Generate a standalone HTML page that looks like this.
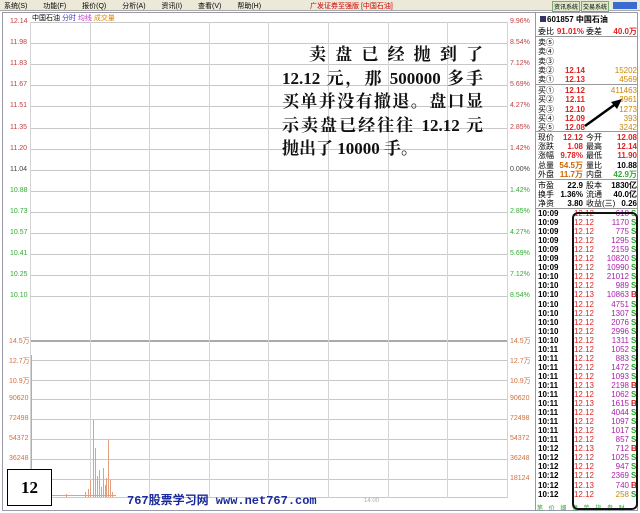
<!DOCTYPE html><html><head><meta charset="utf-8"><style>
*{margin:0;padding:0;box-sizing:border-box}
body{width:640px;height:513px;overflow:hidden;background:#fff;font-family:"Liberation Sans","Noto Sans CJK SC",sans-serif;font-size:8px;position:relative}
.a{position:absolute;white-space:nowrap}
.hl{position:absolute;height:1px;background:#c8c8c8}
.vl{position:absolute;width:1px;background:#d4d4d4}
.lab{position:absolute;font-size:7px;color:#c04040}
.rt{position:absolute;font-size:8px;left:536px;width:100px;height:9px;line-height:9px}
.big{position:absolute;left:282px;width:201px;font-family:"Liberation Serif","Noto Serif CJK SC",serif;font-weight:bold;font-size:17px;line-height:23.5px;color:#111;text-align:justify;text-align-last:justify}
</style></head><body>
<div class="a" style="left:0;top:0;width:640px;height:11px;background:#ece9d8;border-bottom:1px solid #aaa"></div>
<div class="a" style="left:4px;top:1px;font-size:7px;color:#000;word-spacing:14px">系统(S) 功能(F) 报价(Q) 分析(A) 资讯(I) 查看(V) 帮助(H)</div>
<div class="a" style="left:310px;top:1px;font-size:7px;color:#c00">广发证券至强版 [中国石油]</div>
<div class="a" style="left:552px;top:1px;font-size:6px;background:#dde8c8;border:1px solid #7a7;padding:0 1px">资讯系统</div>
<div class="a" style="left:581px;top:1px;font-size:6px;background:#dde8c8;border:1px solid #7a7;padding:0 1px">交易系统</div>
<div class="a" style="left:613px;top:2px;width:24px;height:7px;background:#3a6bd0"></div>
<div class="a" style="left:2px;top:12px;width:636px;height:499px;border:1px solid #99a"></div>
<div class="a" style="left:32px;top:13px;font-size:7px"><span>中国石油</span> <span style="color:#33c">分时</span> <span style="color:#c3c">均线</span> <span style="color:#d80">成交量</span></div>
<div class="a" style="left:31px;top:22px;width:85px;height:1px;background:#a3f"></div>
<div id="g"></div>
<div class="big" style="top:43px;padding-left:27px">卖盘已经抛到了</div>
<div class="big" style="top:67px">12.12 元，那 500000 多手</div>
<div class="big" style="top:90px">买单并没有撤退。盘口显</div>
<div class="big" style="top:114px">示卖盘已经往往 12.12 元</div>
<div class="big" style="top:137px;text-align-last:left">抛出了 10000 手。</div>
<div class="a" style="left:7px;top:469px;width:45px;height:37px;border:1px solid #000;background:#fff;font:bold 17px 'Liberation Serif',serif;text-align:center;line-height:36px">12</div>
<div class="a" style="left:127px;top:491px;font:bold 12px 'Liberation Mono','Noto Sans CJK SC',monospace;color:#1a2a9a">767股票学习网 www.net767.com</div>
<div class="a" style="left:364px;top:498px;font-size:6px;color:#aaa">14:00</div>
<div class="vl" style="left:535px;top:12px;height:499px;background:#999"></div>
<div id="r"></div>
<div class="a" style="left:572px;top:212px;width:66px;height:298px;border:2px solid #111;border-radius:6px"></div>
<svg class="a" style="left:580px;top:95px" width="45" height="35"><line x1="5" y1="31" x2="37" y2="8" stroke="#000" stroke-width="2.5"/><polygon points="42,4 31,7 37,14" fill="#000"/></svg>
<script>
var g='',i;
var pl=['12.14','11.98','11.83','11.67','11.51','11.35','11.20','11.04','10.88','10.73','10.57','10.41','10.25','10.10'];
var pr=['9.96%','8.54%','7.12%','5.69%','4.27%','2.85%','1.42%','0.00%','1.42%','2.85%','4.27%','5.69%','7.12%','8.54%'];
for(i=0;i<14;i++){var y=22+i*21.1;g+='<div class="hl" style="left:30px;width:478px;top:'+y+'px"></div>';
g+='<div class="lab" style="left:10px;top:'+(y-4)+'px;color:'+(i<7?'#c04040':(i==7?'#444':'#3a3'))+'">'+pl[i]+'</div>';
g+='<div class="lab" style="left:510px;top:'+(y-4)+'px;color:'+(i<7?'#c04040':(i==7?'#444':'#3a3'))+'">'+pr[i]+'</div>';}
var vl=['14.5万','12.7万','10.9万','90620','72498','54372','36248','18124'];
for(i=0;i<8;i++){var y=340+i*19.8;g+='<div class="hl" style="left:30px;width:478px;top:'+y+'px;'+(i==0?'height:2px;background:#aaa':'')+'"></div>';
g+='<div class="lab" style="left:9px;top:'+(y-4)+'px;color:#d07040">'+vl[i]+'</div><div class="lab" style="left:510px;top:'+(y-4)+'px;color:#d07040">'+vl[i]+'</div>';}
g+='<div class="hl" style="left:30px;width:478px;top:497px"></div>';
for(i=0;i<9;i++){g+='<div class="vl" style="left:'+(30+i*59.6)+'px;top:22px;height:476px"></div>';}
var bars=[[31,355],[88,489],[90,480],[93,420],[95,448],[97,476],[99,470],[101,487],[103,468],[105,485],[106,478],[108,440],[110,480],[112,492],[66,494],[85,492]];
bars.forEach(function(b){g+='<div class="a" style="left:'+b[0]+'px;top:'+b[1]+'px;width:1px;height:'+(497-b[1])+'px;background:#e0a080"></div>';});
g+='<div class="a" style="left:31px;top:495px;width:85px;height:1px;background:#e0a080"></div>';
document.getElementById('g').innerHTML=g;
var r='';function row(y,h){r+='<div class="rt" style="top:'+y+'px">'+h+'</div>';}
function L(t,x,c,b){return '<span class="a" style="left:'+x+'px;color:'+(c||'#000')+';'+(b?'font-weight:bold':'')+'">'+t+'</span>';}
function R(t,x,c,b){return '<span class="a" style="right:'+(100-x)+'px;color:'+(c||'#000')+';'+(b?'font-weight:bold':'')+'">'+t+'</span>';}
row(15,'<span class="a" style="left:4px;top:1px;width:6px;height:6px;background:#336"></span>'+L('601857 中国石油',11,'#000',true));
row(27,L('委比',2)+R('91.01%',48,'#d22',1)+L('委差',50)+R('40.0万',101,'#d22',1));
var s=['卖⑤','卖④','卖③','卖②','卖①','买①','买②','买③','买④','买⑤'],sp=['','','','12.14','12.13','12.12','12.11','12.10','12.09','12.08'],sv=['','','','15202','4569','411463','3961','1273','393','3242'];
for(i=0;i<10;i++)row(38+i*9.3+(i>4?1.5:0),L(s[i],2)+R(sp[i],49,'#d22',1)+R(sv[i],101,'#c80'));
var q=[['现价','12.12','今开','12.08'],['涨跌','1.08','最高','12.14'],['涨幅','9.78%','最低','11.90'],['总量','54.5万','量比','10.88'],['外盘','11.7万','内盘','42.9万'],['市盈','22.9','股本','1830亿'],['换手','1.36%','流通','40.0亿'],['净资','3.80','收益(三)','0.26']];
for(i=0;i<8;i++){var y=133+i*9.2+(i>4?2:0);row(y,L(q[i][0],2)+R(q[i][1],47,i<3?'#d22':(i<5?'#c60':'#000'),1)+L(q[i][2],50)+R(q[i][3],101,i==4?'#3a3':(i<3?'#d22':'#000'),1));}
var t=[['10:09','12.12','618','S'],['10:09','12.12','1170','S'],['10:09','12.12','775','S'],['10:09','12.12','1295','S'],['10:09','12.12','2159','S'],['10:09','12.12','10820','S'],['10:09','12.12','10990','S'],['10:10','12.12','21012','S'],['10:10','12.12','989','S'],['10:10','12.13','10863','B'],['10:10','12.12','4751','S'],['10:10','12.12','1307','S'],['10:10','12.12','2076','S'],['10:10','12.12','2996','S'],['10:10','12.12','1311','S'],['10:11','12.12','1052','S'],['10:11','12.12','883','S'],['10:11','12.12','1472','S'],['10:11','12.12','1093','S'],['10:11','12.13','2198','B'],['10:11','12.12','1062','S'],['10:11','12.13','1615','B'],['10:11','12.12','4044','S'],['10:11','12.12','1097','S'],['10:11','12.12','1017','S'],['10:11','12.12','857','S'],['10:12','12.13','712','B'],['10:12','12.12','1025','S'],['10:12','12.12','947','S'],['10:12','12.12','2369','S'],['10:12','12.13','740','B'],['10:12','12.12','258','S']];
for(i=0;i<32;i++){var k=t[i];row(209+i*9.05,L(k[0],2,'#000',1)+R(k[1],58,'#d22')+R(k[2],93,k[2]=='258'?'#c80':'#a2a')+L(k[3],95,k[3]=='B'?'#c22':'#2a2',1));}
r+='<div class="hl" style="left:536px;width:102px;top:36px;background:#999"></div><div class="hl" style="left:536px;width:102px;top:84px;background:#999"></div><div class="hl" style="left:536px;width:102px;top:131px;background:#999"></div><div class="hl" style="left:536px;width:102px;top:179px;background:#999"></div><div class="hl" style="left:536px;width:102px;top:208px;background:#999"></div>';
r+='<div class="a" style="left:537px;top:503px;font-size:6px;color:#3a3;word-spacing:4px">笔 价 细 盘 势 指 参 财</div>';
document.getElementById('r').innerHTML=r;
</script>
</body></html>
